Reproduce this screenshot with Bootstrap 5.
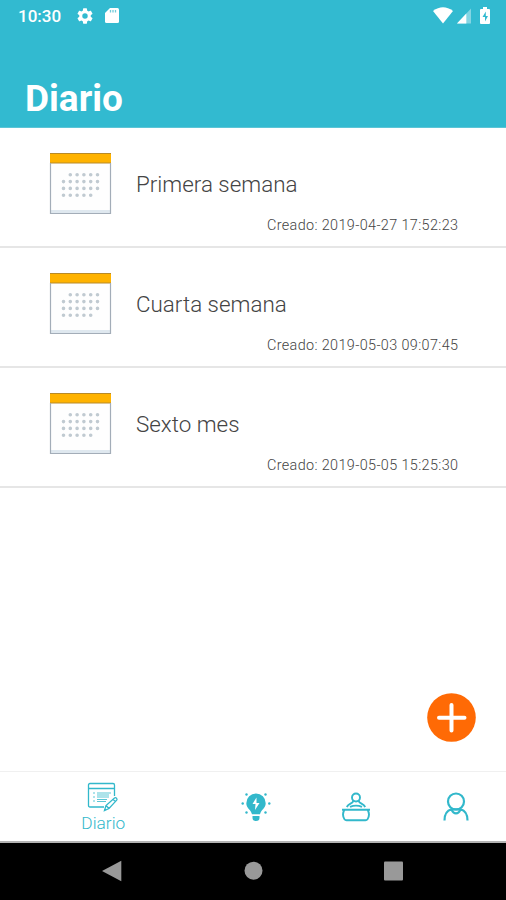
<!DOCTYPE html>
<html lang="es">
<head>
<meta charset="utf-8">
<meta name="viewport" content="width=device-width, initial-scale=1">
<title>Diario</title>
<link href="https://cdn.jsdelivr.net/npm/bootstrap@5.3.0/dist/css/bootstrap.min.css" rel="stylesheet">
<style>
  body { font-family: Roboto, "Liberation Sans", sans-serif; }
  svg { display: block; flex: none; }
  .screen { width: 506px; height: 900px; background: #fff; }
  .app-header { height: 128px; background: #32bad0; border-bottom: 1px solid #5cc5d6; }
  .status-bar { height: 31px; padding: 0 15px 0 18px; }
  .clock { font-size: 17px; font-weight: 500; line-height: 32px; }
  .sd { margin-left: 12px; }
  .page-title { font-size: 37px; font-weight: 700; line-height: 44px; padding: 46px 0 0 25px; }
  .entry { height: 120px; border-bottom: 2px solid #e6e6e6; padding: 24px 48px 0 49px; }
  .entry-name { font-size: 22.4px; font-weight: 300; line-height: 26px; color: #444; margin-left: 24px; padding-top: 19px; }
  .entry-date { font-size: 14.4px; font-weight: 300; line-height: 18px; letter-spacing: .37px; color: #444; margin: 2px -.37px 0 0; }
  .fab-row { padding: 0 30px 29px 0; }
  .tabs { height: 72px; border-top: 1px solid #f0f0f0; border-bottom: 2px solid #b4b4b4; color: #32b8cb; }
  .tab-main { width: 207px; }
  .tab-item { width: 100px; }
  .tab-label { font-size: 17.3px; font-weight: 300; line-height: 20px; margin-top: 1px; }
  .system-nav { height: 57px; background: #000; }
</style>
<script src="https://cdn.jsdelivr.net/npm/bootstrap@5.3.0/dist/js/bootstrap.bundle.min.js"></script>
</head>
<body class="m-0 overflow-hidden">
<svg width="0" height="0" class="position-absolute" aria-hidden="true">
  <symbol id="calendar" viewBox="0 0 63 63">
    <rect x="1" y="1" width="61" height="61" fill="#fefefe"/>
    <rect x="1" y="58" width="61" height="4" fill="#dfe8ef"/>
    <rect x="1" y="1" width="61" height="10" fill="#ffb300"/>
    <path d="M1 1.500h61M1 11h61" stroke="#b88a28" stroke-width="1" fill="none"/>
    <path d="M1.500 11v50.500h60V11" stroke="#a3adb8" stroke-width="1.200" fill="none"/>
    <g stroke="#c0cad1" stroke-width="3.600" stroke-linecap="round" stroke-dasharray="0 6.8" fill="none">
      <path d="M21.300 22.800h27.400M14.500 29.600h34.200M14.500 36.400h34.200M14.500 43.200h27.400"/>
    </g>
  </symbol>
</svg>
<div class="screen d-flex flex-column">
  <header class="app-header text-white">
    <div class="status-bar d-flex align-items-center">
      <span class="clock">10:30</span>
      <svg class="ms-3" width="16" height="16" viewBox="2 2 20 20" fill="#fff"><path d="M19.140 12.940c.04-.3.06-.61.06-.94s-.02-.64-.07-.94l2.030-1.580a.5.5 0 0 0 .12-.61l-1.920-3.320a.5.5 0 0 0-.59-.22l-2.390.96a7 7 0 0 0-1.620-.94l-.36-2.540a.5.5 0 0 0-.48-.41h-3.840a.5.5 0 0 0-.47.41l-.36 2.540c-.59.24-1.130.57-1.620.94l-2.390-.96a.5.5 0 0 0-.59.22L2.740 8.870a.5.5 0 0 0 .12.61l2.030 1.580a6 6 0 0 0 0 1.880l-2.030 1.580a.5.5 0 0 0-.12.61l1.920 3.320c.12.22.37.29.59.22l2.390-.96c.5.38 1.030.7 1.620.94l.36 2.540c.05.24.24.41.48.41h3.840c.24 0 .44-.17.47-.41l.36-2.540c.59-.24 1.130-.56 1.620-.94l2.390.96c.22.08.47 0 .59-.22l1.920-3.320a.5.5 0 0 0-.12-.61zM12 15.400a3.400 3.400 0 1 1 0-6.800 3.400 3.400 0 0 1 0 6.800z"/></svg>
      <svg class="sd me-auto" width="14" height="17" viewBox="0 0 14 17"><path d="M5 1h7.500q1.500 0 1.500 1.500v12q0 1.500-1.500 1.500h-11q-1.500 0-1.500-1.500V6z" fill="#fff"/><path d="M5.500 3v2.500M8 3v2.500M10.500 3v2.500" stroke="#72cbd9" stroke-width="1.300"/></svg>
      <svg width="20" height="17" viewBox="0 0 20 17"><path d="M0 4q10-7.500 20 0L10 16.500z" fill="#fff"/></svg>
      <svg class="ms-1" width="14" height="16" viewBox="0 0 15 16"><path d="M15 0v16H0z" fill="#fff" opacity=".4"/><path d="M10 5.330V16H0z" fill="#fff"/></svg>
      <svg class="ms-2" width="12" height="17" viewBox="0 0 12 17"><path d="M4 0h4v2h2q1 0 1 1v13q0 1-1 1H2q-1 0-1-1V3q0-1 1-1h2z" fill="#fff"/><path d="M6.800 4.500L3.500 10H6v4.500L9 9H6.800z" fill="#32bad0"/></svg>
    </div>
    <h1 class="page-title m-0">Diario</h1>
  </header>
  <main class="flex-grow-1 d-flex flex-column">
    <article class="entry">
      <div class="d-flex"><svg width="63" height="63"><use href="#calendar"/></svg><div class="entry-name">Primera semana</div></div>
      <div class="entry-date text-end">Creado: 2019-04-27 17:52:23</div>
    </article>
    <article class="entry">
      <div class="d-flex"><svg width="63" height="63"><use href="#calendar"/></svg><div class="entry-name">Cuarta semana</div></div>
      <div class="entry-date text-end">Creado: 2019-05-03 09:07:45</div>
    </article>
    <article class="entry">
      <div class="d-flex"><svg width="63" height="63"><use href="#calendar"/></svg><div class="entry-name">Sexto mes</div></div>
      <div class="entry-date text-end">Creado: 2019-05-05 15:25:30</div>
    </article>
    <div class="fab-row mt-auto d-flex justify-content-end">
      <svg width="49" height="49" viewBox="0 0 49 49"><circle cx="24.500" cy="24.500" r="24.300" fill="#ff6a05"/><path d="M24.500 12v25.500M12 24.700h25.500" stroke="#fff" stroke-width="4" stroke-linecap="round"/></svg>
    </div>
  </main>
  <nav class="tabs d-flex">
    <div class="tab-main d-flex flex-column align-items-center pt-2">
      <svg width="32" height="32" viewBox="0 0 32 32" fill="none" stroke="currentColor" stroke-width="1.300"><path d="M17 27H3q-1.500 0-1.500-1.500V5q0-1.500 1.500-1.500h23q1.500 0 1.500 1.500v11M1.500 8.500h26"/><path d="M6 13h2M6 17h2M6 21h2M10 13h14M10 15h12M10 17h12M10 19.500h10M10 21.500h9" stroke-width="1.100" opacity=".8"/><path d="M17.500 30.500l1.500-5L27.500 18q1-.8 2 .2t.2 2L22 28.500zM19 25.500l3 3M26 19.300l2.600 2.600"/></svg>
      <div class="tab-label">Diario</div>
    </div>
    <div class="tab-item d-flex align-items-center justify-content-center">
      <svg width="30" height="30" viewBox="0 0 30 30" fill="currentColor"><path d="M15 1.500a9.700 9.700 0 0 0-9.700 9.700c0 5 4.700 6.500 5.700 11h8c1-4.500 5.700-6 5.700-11A9.700 9.700 0 0 0 15 1.500z"/><path d="M11.500 24h7v2q0 3-3.500 3t-3.500-3z"/><path d="M15.500 5.500l-4 6.500h3l-.5 6 4.500-7h-3z" fill="#fff"/><g><circle cx="5.500" cy="2.500" r="1.200"/><circle cx="24.500" cy="2.500" r="1.200"/><circle cx="1.700" cy="11.500" r="1.200"/><circle cx="28.300" cy="11.500" r="1.200"/><circle cx="5.500" cy="20.500" r="1.200"/><circle cx="24.500" cy="20.500" r="1.200"/></g></svg>
    </div>
    <div class="tab-item d-flex align-items-center justify-content-center">
      <svg width="30" height="30" viewBox="0 0 30 30" fill="none" stroke="currentColor" stroke-width="1.900"><circle cx="15" cy="5.500" r="4"/><path d="M12.500 8.500q-.5 2-3 3.200-2.700 1.300-3.700 3.300M17.500 8.500q.5 2 3 3.200 2.700 1.300 3.700 3.300M9 14.800q6-2.400 12 0"/><path d="M1 17.800h28M3.500 17.800q-3 4.700 0 9.400.7 1 2 1h19q1.300 0 2-1 3-4.700 0-9.400"/></svg>
    </div>
    <div class="tab-item d-flex align-items-center justify-content-center">
      <svg width="28" height="30" viewBox="0 0 28 30" fill="none" stroke="currentColor" stroke-width="2.200"><circle cx="14" cy="9.500" r="8"/><path d="M2.500 28.500C2.500 22 5 18.500 9.500 17.300q1.500 4 4.500 4t4.500-4C23 18.500 25.500 22 25.500 28.500M9.500 17.300h9"/></svg>
    </div>
  </nav>
  <footer class="system-nav d-flex align-items-center">
    <svg width="506" height="57" viewBox="0 0 506 57" fill="#999"><path d="M102 28l19.300-10.300v20.500z"/><circle cx="253.500" cy="27.700" r="9"/><rect x="384" y="18.500" width="19" height="19" rx="1"/></svg>
  </footer>
</div>
</body>
</html>
